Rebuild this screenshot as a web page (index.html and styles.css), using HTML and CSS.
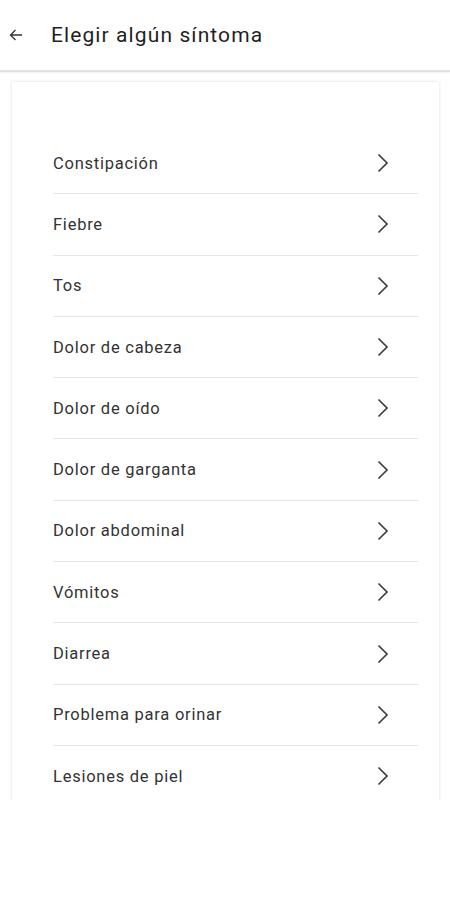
FILE: index.html
```html
<!DOCTYPE html>
<html lang="es">

<head>
    <meta charset="UTF-8">
    <meta name="viewport" content="width=device-width, initial-scale=1.0">
    <title>Elegir algún síntoma</title>
    <link rel="stylesheet" href="styles.css">
</head>

<body>
    <header class="topbar">
        <svg class="back" width="14" height="12" viewBox="0 0 14 12">
            <path d="M13 6H1.5M6.5 1L1.5 6l5 5" fill="none" stroke="#333" stroke-width="1.3" />
        </svg>
        <h1>Elegir algún síntoma</h1>
    </header>

    <main class="content">
        <div class="card">
            <ul class="symptoms">
                <li><span>Constipación</span><svg class="chev" viewBox="0 0 12 20"><path d="M1.5 1.5L10 10l-8.5 8.5" /></svg></li>
                <li><span>Fiebre</span><svg class="chev" viewBox="0 0 12 20"><path d="M1.5 1.5L10 10l-8.5 8.5" /></svg></li>
                <li><span>Tos</span><svg class="chev" viewBox="0 0 12 20"><path d="M1.5 1.5L10 10l-8.5 8.5" /></svg></li>
                <li><span>Dolor de cabeza</span><svg class="chev" viewBox="0 0 12 20"><path d="M1.5 1.5L10 10l-8.5 8.5" /></svg></li>
                <li><span>Dolor de oído</span><svg class="chev" viewBox="0 0 12 20"><path d="M1.5 1.5L10 10l-8.5 8.5" /></svg></li>
                <li><span>Dolor de garganta</span><svg class="chev" viewBox="0 0 12 20"><path d="M1.5 1.5L10 10l-8.5 8.5" /></svg></li>
                <li><span>Dolor abdominal</span><svg class="chev" viewBox="0 0 12 20"><path d="M1.5 1.5L10 10l-8.5 8.5" /></svg></li>
                <li><span>Vómitos</span><svg class="chev" viewBox="0 0 12 20"><path d="M1.5 1.5L10 10l-8.5 8.5" /></svg></li>
                <li><span>Diarrea</span><svg class="chev" viewBox="0 0 12 20"><path d="M1.5 1.5L10 10l-8.5 8.5" /></svg></li>
                <li><span>Problema para orinar</span><svg class="chev" viewBox="0 0 12 20"><path d="M1.5 1.5L10 10l-8.5 8.5" /></svg></li>
                <li><span>Lesiones de piel</span><svg class="chev" viewBox="0 0 12 20"><path d="M1.5 1.5L10 10l-8.5 8.5" /></svg></li>
            </ul>
        </div>
    </main>
</body>

</html>
```

FILE: styles.css
```css
body {
    font-family: Roboto, 'Liberation Sans', sans-serif;
    background-color: #ffffff;
    color: #222;
    margin: 0;
}

.topbar {
    height: 70px;
    display: flex;
    align-items: center;
    border-bottom: 2px solid #e2e2e2;
    box-shadow: 0 1px 2px rgba(0, 0, 0, 0.06);
}

.back {
    margin-left: 9px;
    margin-right: 28px;
}

h1 {
    margin: 0;
    font-size: 21px;
    font-weight: 400;
    color: #1f1f1f;
    letter-spacing: 1.1px;
}

.content {
    box-sizing: border-box;
    height: 728px;
    overflow: hidden;
    padding: 10px 11px 0 12px;
}

.card {
    background-color: #fff;
    box-shadow: 0 0 3px rgba(0, 0, 0, 0.14);
    padding: 51px 21px 0 41px;
    min-height: 900px;
}

.symptoms {
    list-style: none;
    margin: 0;
    padding: 0;
}

.symptoms li {
    height: 60.3px;
    display: flex;
    align-items: center;
    justify-content: space-between;
    border-bottom: 1px solid #e6e6e6;
    font-size: 16.5px;
    letter-spacing: 0.75px;
    color: #333;
}

.chev {
    width: 12px;
    height: 20px;
    margin-right: 29px;
    fill: none;
    stroke: #404040;
    stroke-width: 1.7;
}
```
